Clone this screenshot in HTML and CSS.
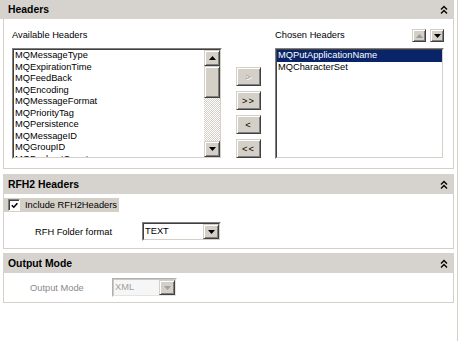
FILE: index.html
```html
<!DOCTYPE html>
<html lang="en">
<head>
    <meta charset="UTF-8">
    <title>MQ Headers</title>
    <link rel="stylesheet" href="styles.css">
</head>
<body>
<div class="page">
    <section class="sect sect-first">
        <div class="bar bar-top">
            <span class="title">Headers</span>
            <svg class="chev" width="8" height="9" viewBox="0 0 8 9"><path d="M1 4.5L4 1.5L7 4.5M1 8.5L4 5.5L7 8.5" fill="none" stroke="#000" stroke-width="1.4"/></svg>
        </div>
        <div class="body hdr-body">
            <div class="pick avail">
                <div class="lbl">Available Headers</div>
                <div class="list avail-list">
                    <div class="list-in">
                        <div class="items">
                            <div class="item">MQMessageType</div>
                            <div class="item">MQExpirationTime</div>
                            <div class="item">MQFeedBack</div>
                            <div class="item">MQEncoding</div>
                            <div class="item">MQMessageFormat</div>
                            <div class="item">MQPriorityTag</div>
                            <div class="item">MQPersistence</div>
                            <div class="item">MQMessageID</div>
                            <div class="item">MQGroupID</div>
                            <div class="item">MQBackoutCount</div>
                        </div>
                        <div class="vscroll">
                            <div class="raised sbtn"><svg width="7" height="4" viewBox="0 0 7 4"><path d="M0 4L3.5 0L7 4Z" fill="#000"/></svg></div>
                            <div class="raised thumb"></div>
                            <div class="track"></div>
                            <div class="raised sbtn"><svg width="7" height="4" viewBox="0 0 7 4"><path d="M0 0L3.5 4L7 0Z" fill="#000"/></svg></div>
                        </div>
                    </div>
                </div>
            </div>
            <div class="moves">
                <button class="raised btn" disabled>&gt;</button>
                <button class="raised btn">&gt;&gt;</button>
                <button class="raised btn">&lt;</button>
                <button class="raised btn">&lt;&lt;</button>
            </div>
            <div class="pick chosen">
                <div class="lbl lbl-row">
                    <span>Chosen Headers</span>
                    <span class="order">
                        <button class="raised mini" disabled><svg width="7" height="4" viewBox="0 0 7 4"><path d="M0 4L3.5 0L7 4Z" fill="#9a9a9a"/></svg></button>
                        <button class="raised mini"><svg width="7" height="4" viewBox="0 0 7 4"><path d="M0 0L3.5 4L7 0Z" fill="#000"/></svg></button>
                    </span>
                </div>
                <div class="list chosen-list">
                    <div class="list-in">
                        <div class="items">
                            <div class="item sel">MQPutApplicationName</div>
                            <div class="item">MQCharacterSet</div>
                        </div>
                    </div>
                </div>
            </div>
        </div>
    </section>

    <section class="sect sect-rfh">
        <div class="bar">
            <span class="title">RFH2 Headers</span>
            <svg class="chev" width="8" height="9" viewBox="0 0 8 9"><path d="M1 4.5L4 1.5L7 4.5M1 8.5L4 5.5L7 8.5" fill="none" stroke="#000" stroke-width="1.4"/></svg>
        </div>
        <div class="body rfh-body">
            <div class="chk-row">
                <span class="cbox"><svg width="7" height="7" viewBox="0 0 7 7"><path d="M0.8 3.2L2.8 5.2L6.4 1.2" fill="none" stroke="#000" stroke-width="1.6"/></svg></span>
                <span>Include RFH2Headers</span>
            </div>
            <div class="field folder-row">
                <span class="flabel">RFH Folder format</span>
                <div class="combo combo-text">
                    <div class="combo-in">
                        <span class="cval">TEXT</span>
                        <span class="raised cbtn"><svg width="7" height="4" viewBox="0 0 7 4"><path d="M0 0L3.5 4L7 0Z" fill="#000"/></svg></span>
                    </div>
                </div>
            </div>
        </div>
    </section>

    <section class="sect sect-out">
        <div class="bar">
            <span class="title">Output Mode</span>
            <svg class="chev" width="8" height="9" viewBox="0 0 8 9"><path d="M1 4.5L4 1.5L7 4.5M1 8.5L4 5.5L7 8.5" fill="none" stroke="#000" stroke-width="1.4"/></svg>
        </div>
        <div class="body out-body">
            <div class="field out-row">
                <span class="flabel off">Output Mode</span>
                <div class="combo combo-xml off">
                    <div class="combo-in">
                        <span class="cval">XML</span>
                        <span class="raised cbtn"><svg width="7" height="4" viewBox="0 0 7 4"><path d="M0 0L3.5 4L7 0Z" fill="#a0a0a0"/></svg></span>
                    </div>
                </div>
            </div>
        </div>
    </section>
</div>
</body>
</html>
```

FILE: styles.css
```css
body { margin: 0; font-family: Tahoma, "Liberation Sans", Arial, sans-serif; font-size: 9.3px; color: #000; background: #fff; }
.page { width: 457px; height: 341px; border-right: 1px solid #d4d0c8; }

/* sections */
.sect { margin-left: 3px; width: 451px; margin-bottom: 4px; }
.sect-first { margin-bottom: 5px; }
.bar { height: 20px; background: #d6d3ce; display: flex; align-items: center; justify-content: space-between; padding: 0 6px 0 5px; box-sizing: border-box; }
.bar-top { height: 19px; margin-left: -3px; width: 454px; padding-left: 8px; }
.title { font-weight: bold; font-size: 10.4px; }
.chev { display: block; }
.body { border: 1px solid #d4d0c8; border-top: 0; }

/* classic 3d bits */
.raised { background: #d4d0c8; border: 1px solid; border-color: #d4d0c8 #404040 #404040 #d4d0c8; box-shadow: inset 1px 1px #fff, inset -1px -1px #808080; box-sizing: border-box; padding: 0; }

/* headers picker */
.hdr-body { display: flex; padding: 10px 9px 9px 8px; }
.pick { display: flex; flex-direction: column; }
.avail { width: 210px; }
.chosen { width: 169px; }
.lbl { height: 13px; line-height: 13px; margin-bottom: 6px; }
.lbl-row { display: flex; justify-content: space-between; align-items: center; }
.order { display: flex; gap: 4px; }
.mini { width: 14px; height: 13px; display: flex; align-items: center; justify-content: center; }
.mini svg { display: block; }

.list { height: 111px; border: 1px solid; border-color: #808080 #fff #fff #808080; box-sizing: border-box; background: #fff; }
.list-in { height: 100%; border: 1px solid; border-color: #404040 #d4d0c8 #d4d0c8 #404040; box-sizing: border-box; display: flex; overflow: hidden; }
.items { flex: 1; overflow: hidden; }
.item { line-height: 11.5px; height: 11.5px; padding-left: 1px; white-space: nowrap; }
.sel { background: #0a246a; color: #fff; }

.vscroll { width: 16px; display: flex; flex-direction: column; }
.sbtn { height: 16px; display: flex; align-items: center; justify-content: center; }
.sbtn svg { display: block; }
.thumb { height: 32px; }
.track { flex: 1; background-color: #fff; background-image: repeating-conic-gradient(#d4d0c8 0 25%, #fff 0 50%); background-size: 2px 2px; }

.moves { display: flex; flex-direction: column; gap: 5px; align-self: flex-end; margin: 0 14px 1px; }
.btn { width: 25px; height: 19px; font-family: inherit; font-size: 9.3px; letter-spacing: 1px; color: #000; }
.btn:disabled { color: #a0a0a0; text-shadow: 1px 1px #fff; }

/* rfh2 */
.rfh-body { padding: 4px 0 7px; }
.chk-row { display: flex; align-items: center; gap: 5px; width: fit-content; height: 14px; padding: 0 2px 0 4px; background: #d4d0c8; }
.cbox { width: 12px; height: 12px; box-sizing: border-box; background: #fff; border: 1px solid; border-color: #808080 #fff #fff #808080; box-shadow: inset 1px 1px #404040; display: flex; align-items: center; justify-content: center; }
.cbox svg { display: block; }

.field { display: flex; align-items: center; }
.folder-row { margin-top: 10px; padding-left: 31px; }
.folder-row .flabel { width: 107px; }
.out-body { padding: 5px 0; }
.out-row { padding-left: 26px; }
.out-row .flabel { width: 82px; }
.flabel.off { color: #8a8a8a; }

.combo { height: 19px; border: 1px solid; border-color: #808080 #fff #fff #808080; box-sizing: border-box; background: #fff; }
.combo-in { height: 100%; border: 1px solid; border-color: #404040 #d4d0c8 #d4d0c8 #404040; box-sizing: border-box; display: flex; }
.combo-text { width: 79px; }
.combo-xml { width: 65px; }
.cval { flex: 1; line-height: 15px; padding-left: 1px; }
.cbtn { width: 16px; height: 15px; display: flex; align-items: center; justify-content: center; }
.cbtn svg { display: block; }
.combo.off { border-color: #b0b0b0 #fff #fff #b0b0b0; background: #f6f6f6; }
.combo.off .combo-in { border-color: #c8c8c8 #e4e4e4 #e4e4e4 #c8c8c8; }
.combo.off .cval { color: #a0a0a0; }
```
